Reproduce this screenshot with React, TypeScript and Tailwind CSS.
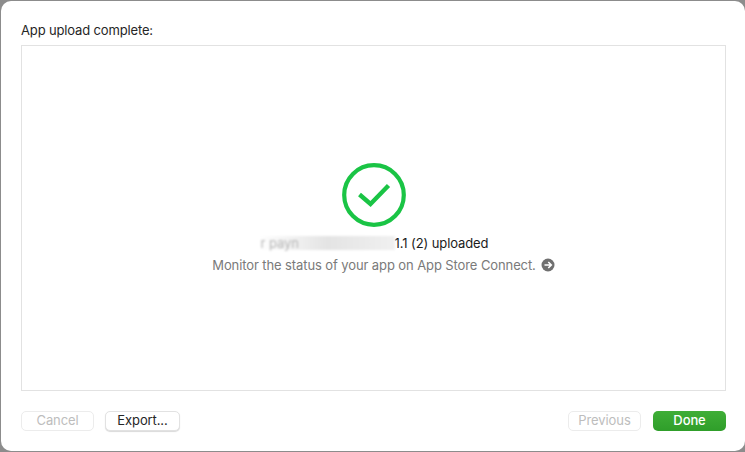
export default function App() {
  return (
    <div className="h-[452px] w-[745px] overflow-hidden bg-[#8c8c8c] font-['Inter',sans-serif] text-[13px] tracking-[-0.1px] text-[#262626]">
      <div className="ml-[1px] mt-[1px] flex h-[450px] w-[744px] flex-col rounded-[10px] bg-white pl-[20px] pt-[1px]">
        <div className="flex h-[43px] shrink-0 items-end pb-[7px] leading-[16px] tracking-[-0.15px]">App upload complete:</div>
        <div className="flex h-[346px] w-[705px] shrink-0 flex-col items-center border border-[#e2e2e2] pt-[117px]">
          <svg width="64" height="64" viewBox="0 0 64 64" fill="none">
            <circle cx="32" cy="32" r="29.8" stroke="#1ac445" strokeWidth="4.2" />
            <path d="M17.5 31.5 L28.5 41 L46.5 22.5" stroke="#1ac445" strokeWidth="4.4" />
          </svg>
          <div className="relative mt-[6px] flex h-[20px] items-center leading-[20px] text-[#1c1c1c]">
            <span className="flex h-[14px] w-[136px] items-center bg-gradient-to-r from-[#ffffff] via-[#e4e4e4] to-[#f0f0f0] blur-[1px]">
              <span className="ml-[2px] text-[#b5b5b5]">r payn</span>
            </span>
            <span>1.1 (2) uploaded</span>
          </div>
          <div className="ml-[20px] mt-[2px] flex h-[20px] items-center gap-[5px] leading-[20px] text-[#7a7a7a]">
            <span>Monitor the status of your app on App Store Connect.</span>
            <svg width="14" height="14" viewBox="0 0 14 14" fill="none">
              <circle cx="7" cy="7" r="6.5" fill="#6f6f6f" />
              <path d="M3.5 7H10M7.3 4L10.3 7L7.3 10" stroke="#ffffff" strokeWidth="1.6" />
            </svg>
          </div>
        </div>
        <div className="mt-[20px] flex w-[705px] items-start justify-between">
          <div className="flex gap-[11px]">
            <button className="flex h-[20px] w-[73px] items-center justify-center rounded-[5px] border border-[#ececec] bg-white pb-[1px] text-[#bdbdbd]">Cancel</button>
            <button className="flex h-[20px] w-[75px] items-center justify-center rounded-[5px] border border-[#e2e2e2] bg-white pb-[1px] text-[#262626] shadow-[0_1px_1px_rgba(0,0,0,0.15)]">Export...</button>
          </div>
          <div className="flex gap-[12px]">
            <button className="flex h-[20px] w-[73px] items-center justify-center rounded-[5px] border border-[#ececec] bg-white pb-[1px] text-[#bdbdbd]">Previous</button>
            <button className="flex h-[20px] w-[73px] items-center justify-center rounded-[5px] bg-gradient-to-b from-[#3fae37] to-[#2f9e2a] pb-[1px] font-medium text-white">Done</button>
          </div>
        </div>
      </div>
    </div>
  );
}
